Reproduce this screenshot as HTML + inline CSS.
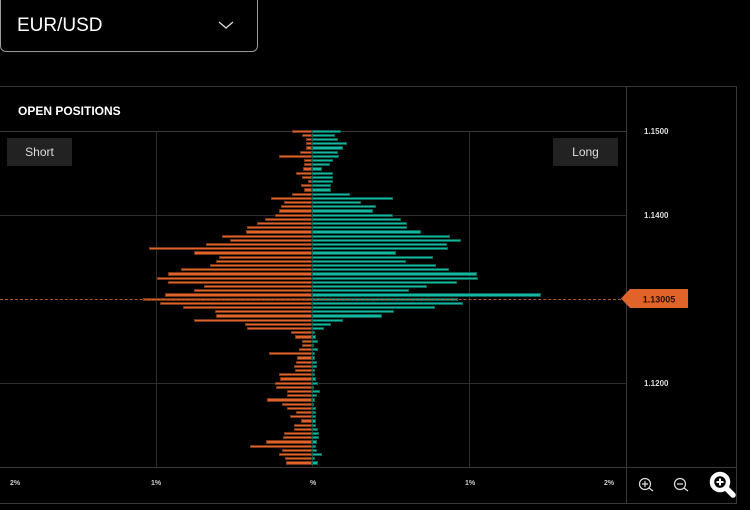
<!DOCTYPE html>
<html><head><meta charset="utf-8"><style>
*{margin:0;padding:0;box-sizing:border-box}
body{width:750px;height:510px;background:#000;position:relative;overflow:hidden;font-family:"Liberation Sans",sans-serif;color:#fff}
.a{position:absolute}
</style></head><body>
<div class="a" style="left:0;top:0;width:258px;height:52px;border:1px solid #9a9a9a;border-top:none;border-radius:0 0 6px 6px"></div>
<div class="a" style="left:17px;top:15px;font-size:19px;color:#fff">EUR/USD</div>
<svg class="a" style="left:218px;top:20px" width="16" height="10"><path d="M1 2 L8 8 L15 2" stroke="#ddd" stroke-width="1.3" fill="none"/></svg>
<div class="a" style="left:0;top:86px;width:737px;height:418px;border-top:1px solid #3a3a3a;border-right:1px solid #3a3a3a;border-bottom:1px solid #3a3a3a"></div>
<div class="a" style="left:626px;top:86px;width:1px;height:418px;background:#3a3a3a"></div>
<div class="a" style="left:0;top:131px;width:626px;height:1px;background:#3a3a3a"></div>
<div class="a" style="left:0;top:215px;width:626px;height:1px;background:#2e2e2e"></div>
<div class="a" style="left:0;top:383px;width:626px;height:1px;background:#2e2e2e"></div>
<div class="a" style="left:0;top:467px;width:737px;height:1px;background:#3a3a3a"></div>
<div class="a" style="left:156px;top:131px;width:1px;height:336px;background:#2e2e2e"></div>
<div class="a" style="left:469px;top:131px;width:1px;height:336px;background:#2e2e2e"></div>
<div class="a" style="left:312px;top:131px;width:1px;height:336px;background:#2e2e2e"></div>
<div class="a" style="left:18px;top:104px;font-size:12px;font-weight:bold">OPEN POSITIONS</div>
<div class="a" style="left:7px;top:138px;width:65px;height:28px;background:#222;font-size:12px;line-height:28px;text-align:center;color:#ddd">Short</div>
<div class="a" style="left:553px;top:138px;width:65px;height:28px;background:#222;font-size:12px;line-height:28px;text-align:center;color:#ddd">Long</div>
<div class="a" style="left:644px;top:127px;font-size:8px;font-weight:bold;color:#ddd">1.1500</div>
<div class="a" style="left:644px;top:211px;font-size:8px;font-weight:bold;color:#ddd">1.1400</div>
<div class="a" style="left:644px;top:379px;font-size:8px;font-weight:bold;color:#ddd">1.1200</div>
<div id="bars"></div>
<div class="a" style="left:0;top:299px;width:626px;height:0;border-top:1px dashed #b05a28"></div>
<svg class="a" style="left:621px;top:289px" width="67" height="20"><path d="M0 9.5 L9 0 H67 V19 H9 Z" fill="#e0642a"/><text x="38" y="13.5" font-size="9" font-weight="bold" text-anchor="middle" fill="#2a1005" font-family="Liberation Sans">1.13005</text></svg>
<div class="a" style="left:10px;top:480px;font-size:7px;font-weight:bold;color:#ccc">2%</div>
<div class="a" style="left:151px;top:480px;font-size:7px;font-weight:bold;color:#ccc">1%</div>
<div class="a" style="left:310px;top:480px;font-size:7px;font-weight:bold;color:#ccc">%</div>
<div class="a" style="left:465px;top:480px;font-size:7px;font-weight:bold;color:#ccc">1%</div>
<div class="a" style="left:604px;top:480px;font-size:7px;font-weight:bold;color:#ccc">2%</div>
<svg class="a" style="left:636px;top:470px" width="114" height="34">
<g stroke="#ddd" fill="none" stroke-width="1.2"><circle cx="9" cy="14" r="5.5"/><path d="M13 18 L17 21 M6 14 H12 M9 11 V17"/>
<circle cx="44" cy="14" r="5.5"/><path d="M48 18 L52 21 M41 14 H47"/></g>
<g fill="none" stroke="#fff"><circle cx="84" cy="12" r="8" stroke-width="4.5"/><path d="M90 18 L97 25" stroke-width="5.5" stroke-linecap="round"/></g>
<circle cx="84" cy="12" r="5.5" fill="#000"/><path d="M80.5 12 H87.5 M84 8.5 V15.5" stroke="#fff" stroke-width="2"/>
</svg>
<script>
var d=[[487,634],[515,616],[529,624],[529,652],[527,640],[509,624],[446,628],[522,610],[523,600],[518,576],[497,609],[517,608],[535,609],[514,602],[522,604],[486,660],[423,788],[462,692],[452,739],[446,728],[434,790],[405,813],[380,832],[352,830],[348,873],[277,959],[299,994],[228,951],[57,955],[192,799],[268,909],[257,829],[240,918],[153,958],[115,1040],[80,1043],[114,981],[223,891],[193,838],[105,1233],[39,983],[91,1000],[160,916],[256,792],[259,757],[192,640],[346,604],[351,582],[483,556],[495,558],[517,563],[516,552],[508,563],[416,556],[502,555],[498,561],[493,561],[495,554],[446,555],[451,557],[435,563],[437,551],[470,571],[470,561],[412,556],[456,553],[471,559],[498,559],[479,559],[512,559],[493,558],[492,564],[463,566],[459,567],[407,560],[360,557],[457,560],[446,575],[465,555],[467,563]];
var h='';
for(var i=0;i<d.length;i++){var y=129.6+i*4.2;var l=130+d[i][0]/3,r=130+d[i][1]/3;
h+='<div class="a" style="left:'+l+'px;top:'+y+'px;width:'+(312.3-l)+'px;height:3.3px;background:#e0642a;border:0.5px solid #7a3515"></div>';
h+='<div class="a" style="left:312.3px;top:'+y+'px;width:'+(r-312.3)+'px;height:3.3px;background:#14b8a0;border:0.5px solid #0a6456"></div>';}
document.getElementById('bars').innerHTML=h;
</script>
</body></html>
